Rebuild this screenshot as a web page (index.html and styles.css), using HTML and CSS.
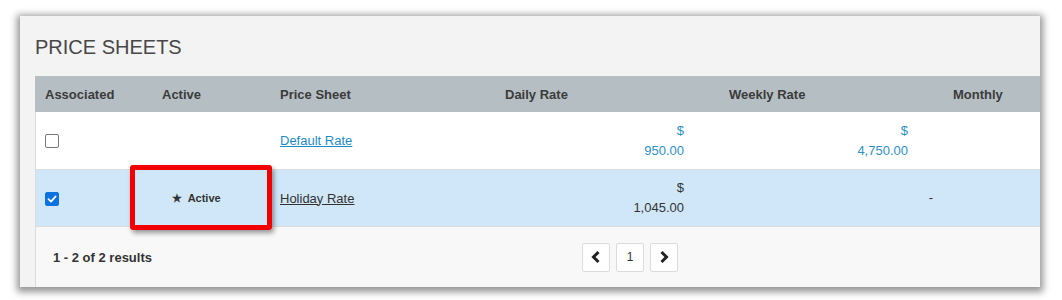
FILE: index.html
```html
<!DOCTYPE html>
<html lang="en">
<head>
    <meta charset="UTF-8">
    <meta name="viewport" content="width=device-width, initial-scale=1.0">
    <title>Price Sheets</title>
    <link rel="stylesheet" href="styles.css">
</head>
<body>
    <div class="panel">
        <h2 class="panel-title">PRICE SHEETS</h2>
        <div class="grid">
            <table class="sheets">
                <colgroup>
                    <col style="width: 117px">
                    <col style="width: 118px">
                    <col style="width: 225px">
                    <col style="width: 224px">
                    <col style="width: 224px">
                    <col>
                </colgroup>
                <thead>
                    <tr>
                        <th>Associated</th>
                        <th>Active</th>
                        <th>Price Sheet</th>
                        <th>Daily Rate</th>
                        <th>Weekly Rate</th>
                        <th>Monthly</th>
                    </tr>
                </thead>
                <tbody>
                    <tr>
                        <td><span class="check"></span></td>
                        <td></td>
                        <td><a href="#" class="sheet-link">Default Rate</a></td>
                        <td class="money blue"><div>$</div><div>950.00</div></td>
                        <td class="money blue"><div>$</div><div>4,750.00</div></td>
                        <td></td>
                    </tr>
                    <tr class="selected">
                        <td><span class="check on"><svg width="10" height="10" viewBox="0 0 10 10"><path d="M1.5 5.2 L4 7.6 L8.6 2.4" fill="none" stroke="#fff" stroke-width="1.8" stroke-linecap="round" stroke-linejoin="round"/></svg></span></td>
                        <td class="active-cell"><span class="star">&#9733;</span> Active</td>
                        <td><a href="#" class="sheet-link dark">Holiday Rate</a></td>
                        <td class="money"><div>$</div><div>1,045.00</div></td>
                        <td class="money dash">-</td>
                        <td></td>
                    </tr>
                </tbody>
            </table>
            <div class="grid-footer">
                <span class="results">1 - 2 of 2 results</span>
                <div class="pager">
                    <button class="page-btn"><svg width="12" height="14" viewBox="0 0 12 14"><path d="M8.5 2 L3.5 7 L8.5 12" fill="none" stroke="#222" stroke-width="3"/></svg></button>
                    <button class="page-btn">1</button>
                    <button class="page-btn"><svg width="12" height="14" viewBox="0 0 12 14"><path d="M3.5 2 L8.5 7 L3.5 12" fill="none" stroke="#222" stroke-width="3"/></svg></button>
                </div>
            </div>
        </div>
        <div class="highlight"></div>
    </div>
</body>
</html>
```

FILE: styles.css
```css
body { margin: 0; padding: 16px 22px 13px 20px; background: #fff; font-family: Arial, "Liberation Sans", sans-serif; }
.panel { position: relative; width: 1020px; height: 271px; background: #f3f3f3; box-shadow: 0 2px 7px 3px rgba(0, 0, 0, 0.42); overflow: hidden; padding-left: 15px; box-sizing: border-box; }
.panel-title { margin: 0; padding: 20px 0 17px; font-size: 20px; line-height: 23px; font-weight: normal; color: #474747; }
.grid { width: 1190px; }
.sheets { width: 100%; border-collapse: collapse; table-layout: fixed; font-size: 13px; }
.sheets th { background: #b5bfc3; color: #3b3b3b; text-align: left; font-weight: bold; height: 36px; padding: 0 10px; }
.sheets td { height: 57px; padding: 0 10px; border-bottom: 1px solid #dcdcdc; background: #fff; color: #333; vertical-align: middle; }
.sheets tbody tr td:first-child { box-shadow: inset 1px 0 #dcdcdc; }
.sheets tr.selected td { background: #d0e7fa; height: 56px; }
.check { display: inline-flex; align-items: center; justify-content: center; width: 14px; height: 14px; box-sizing: border-box; border: 1.5px solid #767676; border-radius: 2px; background: #fff; vertical-align: middle; }
.check.on { background: #0b72e0; border-color: #0b72e0; }
.sheet-link { color: #1e8bc7; text-decoration: underline; }
.sheet-link.dark { color: #333; }
.money { text-align: right; padding-right: 35px !important; line-height: 20px; }
.money.blue { color: #2f91c8; }
.dash { padding-right: 10px !important; }
.active-cell { font-size: 11px; font-weight: bold; padding-left: 20px !important; color: #333; }
.star { font-size: 11px; margin-right: 3px; }
.grid-footer { position: relative; display: flex; align-items: center; justify-content: center; height: 60px; background: #f8f8f8; box-shadow: inset 1px 0 #dcdcdc; }
.results { position: absolute; left: 18px; top: 23px; font-size: 13px; font-weight: bold; color: #333; }
.pager { display: flex; gap: 6px; }
.page-btn { display: flex; align-items: center; justify-content: center; width: 28px; height: 29px; padding: 0; background: #fff; border: 1px solid #dcdcdc; border-radius: 2px; font-family: Arial, "Liberation Sans", sans-serif; font-size: 12px; color: #333; }
.highlight { position: absolute; left: 110px; top: 149px; width: 142px; height: 65px; box-sizing: border-box; border: 5px solid #f20000; border-radius: 3px; box-shadow: 2px 3px 5px rgba(0, 0, 0, 0.4); }
```
